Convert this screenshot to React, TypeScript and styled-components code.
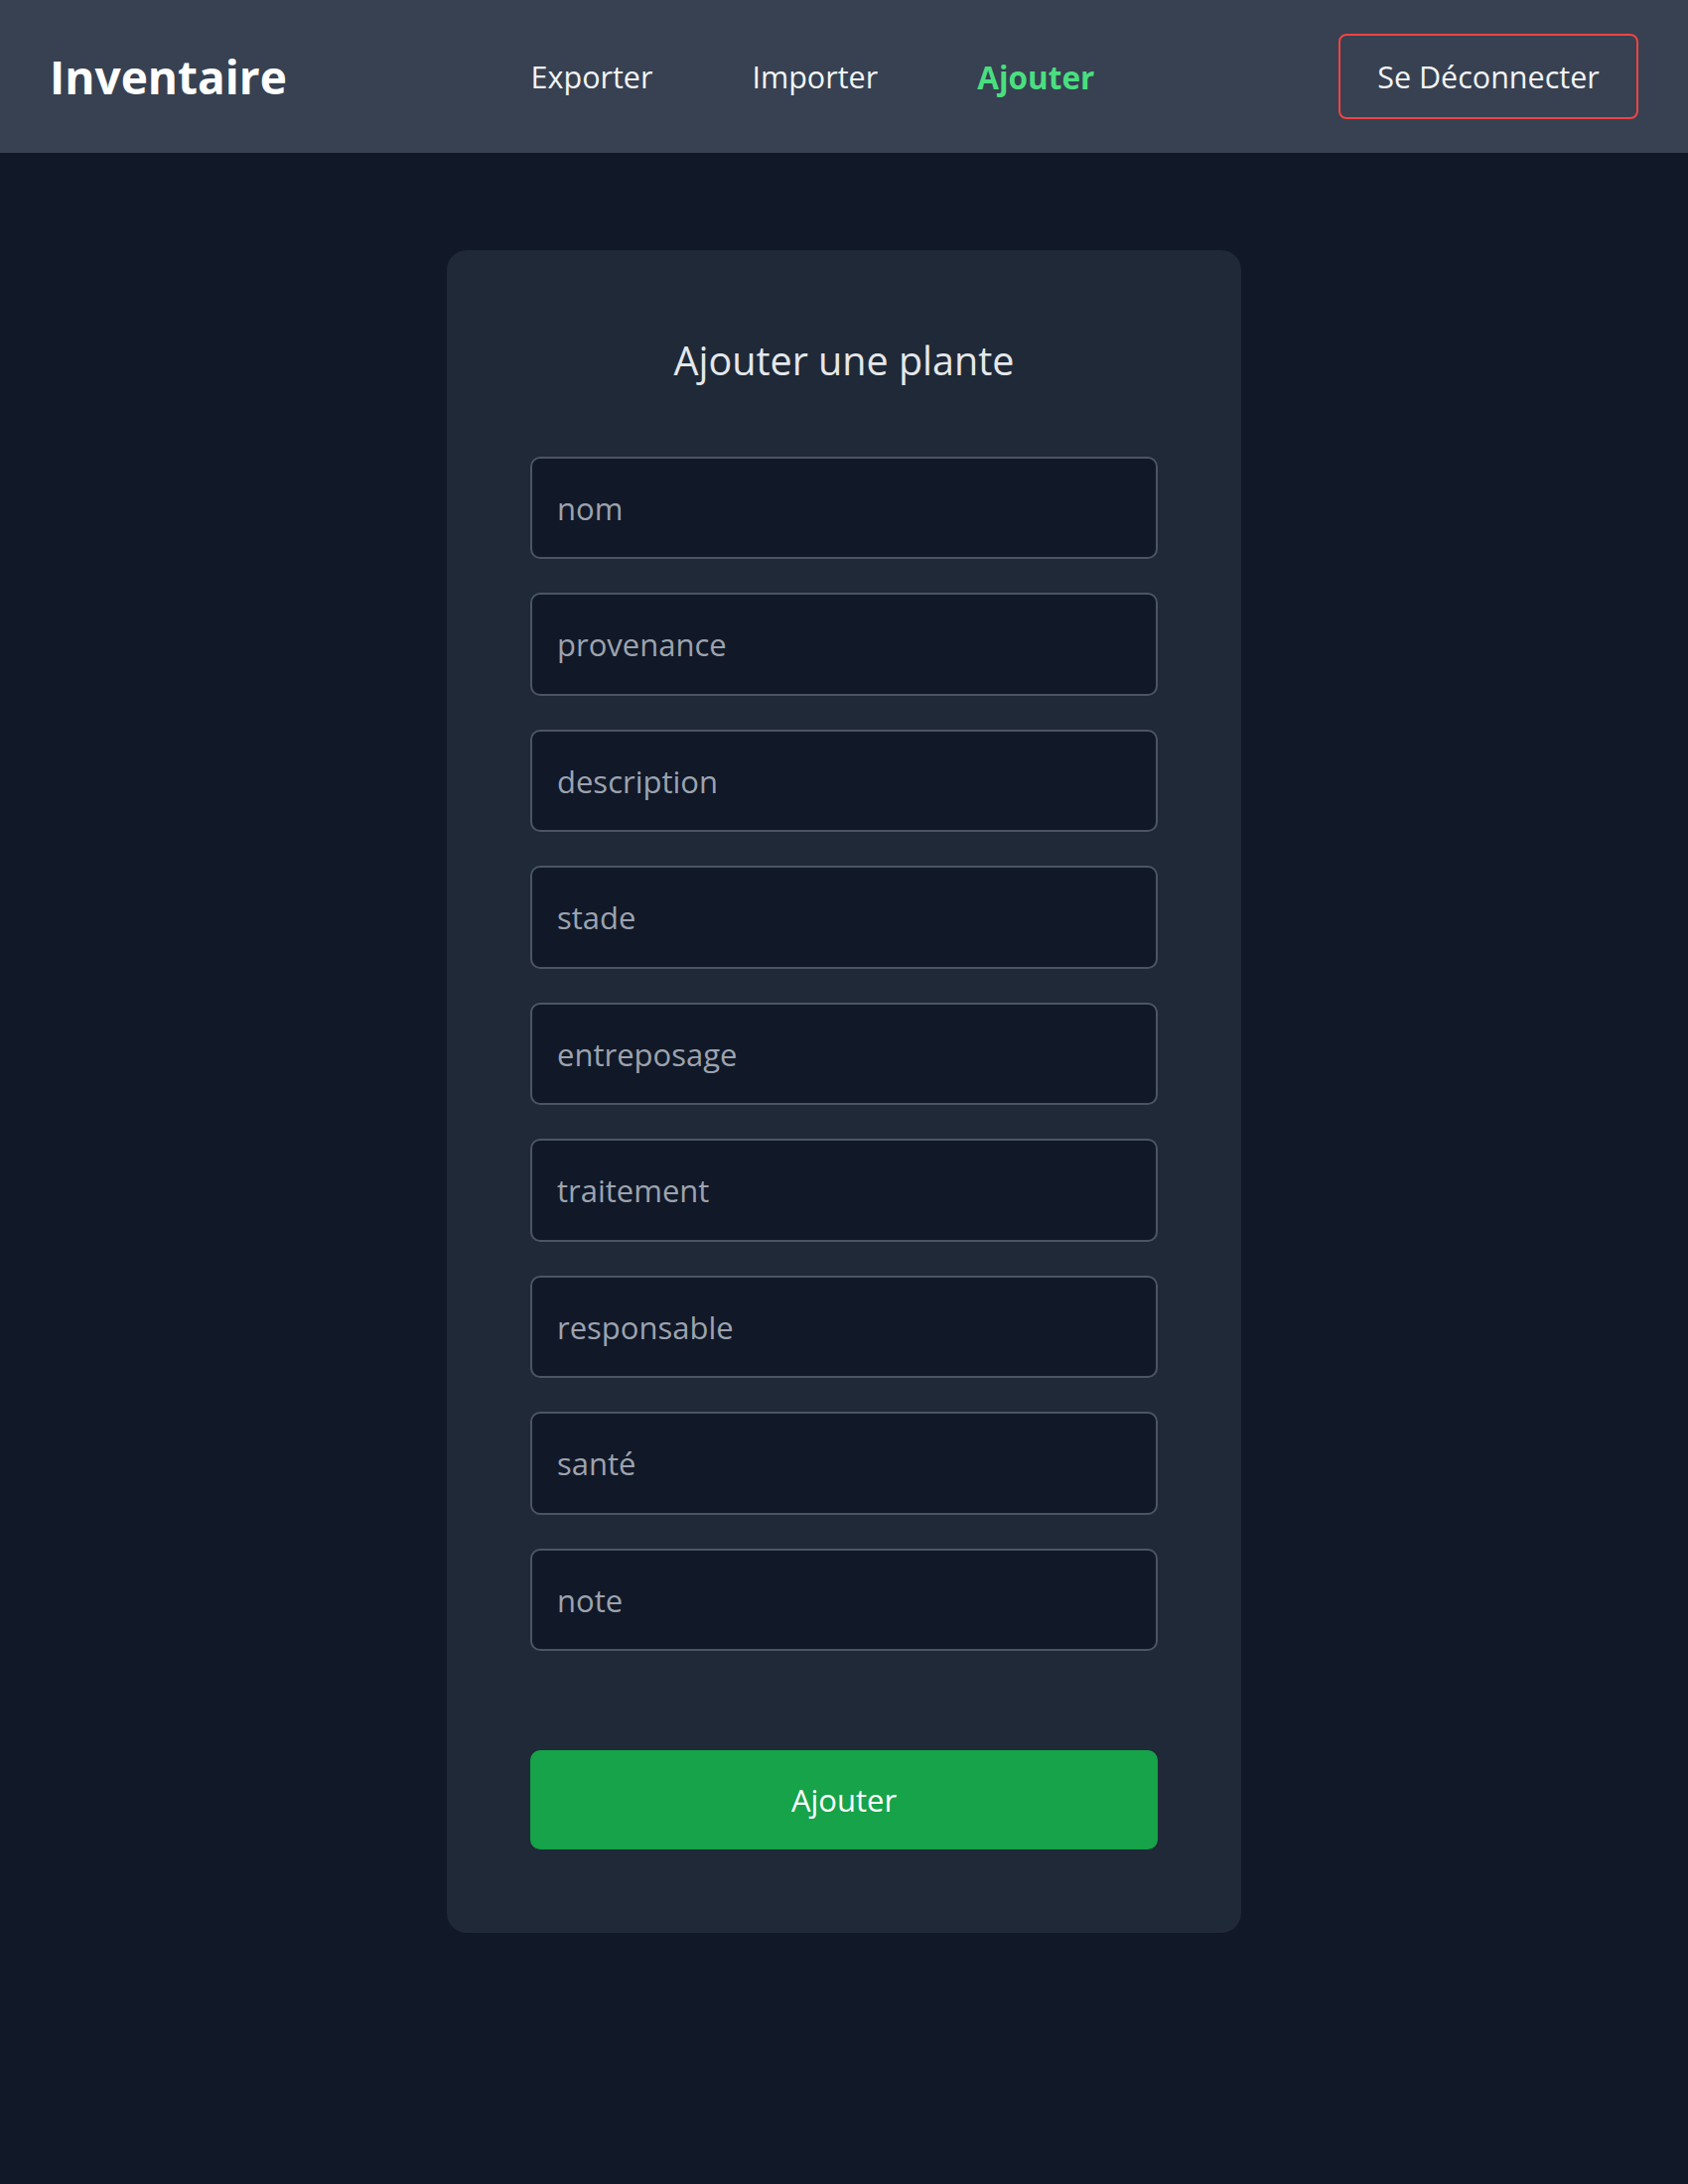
import React from "react";
import styled, { createGlobalStyle } from "styled-components";

const GlobalStyle = createGlobalStyle`
  html, body {
    margin: 0;
    padding: 0;
    background: #111827;
    min-height: 100%;
  }
  body {
    font-family: "Open Sans", "Noto Sans", sans-serif;
    color: #f9fafb;
  }
  * { box-sizing: border-box; }
`;

const Page = styled.div`
  min-height: 2200px;
  background: #111827;
`;

const Header = styled.header`
  height: 154px;
  background: #374151;
  display: flex;
  align-items: center;
  justify-content: space-between;
  padding: 0 50px 0 50px;
`;

const Logo = styled.h1`
  margin: 0;
  font-size: 46px;
  font-weight: 700;
  color: #ffffff;
  line-height: 1;
`;

const Nav = styled.nav`
  display: flex;
  align-items: center;
  gap: 100px;
`;

const NavLink = styled.a<{ $active?: boolean }>`
  font-size: ${(p) => (p.$active ? "31.5px" : "30.5px")};
  font-weight: ${(p) => (p.$active ? 700 : 400)};
  color: ${(p) => (p.$active ? "#4ade80" : "#f3f4f6")};
  text-decoration: none;
  cursor: pointer;
`;

const LogoutButton = styled.button`
  width: 302px;
  height: 86px;
  border: 2px solid #ef4444;
  border-radius: 8px;
  background: transparent;
  color: #f3f4f6;
  font-family: inherit;
  font-size: 30.5px;
  cursor: pointer;
`;

const Main = styled.main`
  display: flex;
  justify-content: center;
  padding-top: 98px;
`;

const Card = styled.form`
  width: 800px;
  background: #1f2937;
  border-radius: 20px;
  padding: 84px;
  display: flex;
  flex-direction: column;
`;

const Title = styled.h2`
  margin: 0 0 70px;
  text-align: center;
  font-size: 39.5px;
  font-weight: 400;
  color: #e5e7eb;
  line-height: normal;
`;

const Fields = styled.div`
  display: flex;
  flex-direction: column;
  gap: 34.2px;
`;

const Input = styled.input`
  width: 100%;
  height: 103.3px;
  background: #111827;
  border: 2px solid #4b5563;
  border-radius: 10px;
  padding: 0 25px;
  font-family: inherit;
  font-size: 31px;
  color: #f3f4f6;
  outline: none;
  &::placeholder {
    color: #9ca3af;
  }
`;

const SubmitButton = styled.button`
  margin-top: 100px;
  width: 100%;
  height: 100px;
  border: none;
  border-radius: 10px;
  background: #16a34a;
  color: #ffffff;
  font-family: inherit;
  font-size: 31px;
  cursor: pointer;
`;

const fields = [
  "nom",
  "provenance",
  "description",
  "stade",
  "entreposage",
  "traitement",
  "responsable",
  "santé",
  "note",
];

export default function App() {
  return (
    <Page>
      <GlobalStyle />
      <Header>
        <Logo>Inventaire</Logo>
        <Nav>
          <NavLink>Exporter</NavLink>
          <NavLink>Importer</NavLink>
          <NavLink $active>Ajouter</NavLink>
        </Nav>
        <LogoutButton type="button">Se Déconnecter</LogoutButton>
      </Header>
      <Main>
        <Card onSubmit={(e) => e.preventDefault()}>
          <Title>Ajouter une plante</Title>
          <Fields>
            {fields.map((f) => (
              <Input key={f} placeholder={f} />
            ))}
          </Fields>
          <SubmitButton type="submit">Ajouter</SubmitButton>
        </Card>
      </Main>
    </Page>
  );
}
